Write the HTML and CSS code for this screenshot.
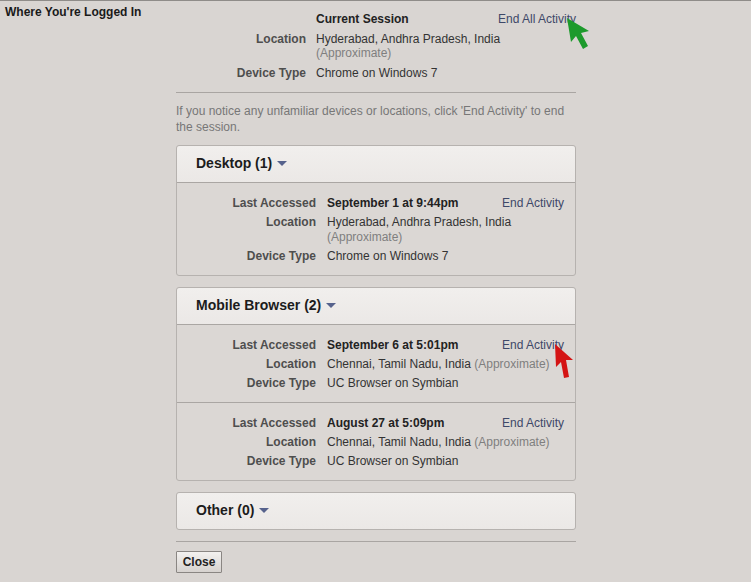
FILE: index.html
```html
<!DOCTYPE html>
<html lang="en">
<head>
    <meta charset="UTF-8">
    <meta name="viewport" content="width=device-width, initial-scale=1.0">
    <title>Where You're Logged In</title>
    <link rel="stylesheet" href="styles.css">
</head>
<body>
    <div class="layout">
        <h1 class="title">Where You're Logged In</h1>

        <div class="main">
            <div class="info current">
                <span class="label"></span>
                <span class="value strong">Current Session</span>
                <a class="action" href="#">End All Activity</a>

                <span class="label">Location</span>
                <span class="value wide">Hyderabad, Andhra Pradesh, India<br><span class="muted">(Approximate)</span></span>

                <span class="label">Device Type</span>
                <span class="value wide">Chrome on Windows 7</span>
            </div>

            <p class="notice">If you notice any unfamiliar devices or locations, click 'End Activity' to end the session.</p>

            <div class="panel">
                <div class="panel-head">Desktop (1) <span class="caret"></span></div>
                <div class="session">
                    <div class="info">
                        <span class="label">Last Accessed</span>
                        <span class="value strong">September 1 at 9:44pm</span>
                        <a class="action" href="#">End Activity</a>

                        <span class="label">Location</span>
                        <span class="value wide">Hyderabad, Andhra Pradesh, India<br><span class="muted">(Approximate)</span></span>

                        <span class="label">Device Type</span>
                        <span class="value wide">Chrome on Windows 7</span>
                    </div>
                </div>
            </div>

            <div class="panel">
                <div class="panel-head">Mobile Browser (2) <span class="caret"></span></div>
                <div class="session">
                    <div class="info">
                        <span class="label">Last Accessed</span>
                        <span class="value strong">September 6 at 5:01pm</span>
                        <a class="action" href="#">End Activity</a>

                        <span class="label">Location</span>
                        <span class="value wide">Chennai, Tamil Nadu, India <span class="muted">(Approximate)</span></span>

                        <span class="label">Device Type</span>
                        <span class="value wide">UC Browser on Symbian</span>
                    </div>
                </div>
                <div class="session">
                    <div class="info">
                        <span class="label">Last Accessed</span>
                        <span class="value strong">August 27 at 5:09pm</span>
                        <a class="action" href="#">End Activity</a>

                        <span class="label">Location</span>
                        <span class="value wide">Chennai, Tamil Nadu, India <span class="muted">(Approximate)</span></span>

                        <span class="label">Device Type</span>
                        <span class="value wide">UC Browser on Symbian</span>
                    </div>
                </div>
            </div>

            <div class="panel">
                <div class="panel-head">Other (0) <span class="caret"></span></div>
            </div>

            <div class="footer">
                <button class="btn" type="button">Close</button>
            </div>
        </div>
    </div>

    <!-- annotation cursors drawn over the screenshot -->
    <svg class="cursor green" width="26" height="34" viewBox="0 0 26 34">
        <polygon points="0,0 4,24 9,18 16,31 21,28 14,15 22,13" fill="#1d9a2c"/>
    </svg>
    <svg class="cursor red" width="22" height="36" viewBox="0 0 22 36">
        <polygon points="0,0 1,23 6,18 9,34 14,33 11,16 18,16" fill="#d41414"/>
    </svg>
</body>
</html>
```

FILE: styles.css
```css
*, *::before, *::after {
    box-sizing: border-box;
}
body {
    margin: 0;
    min-height: 582px;
    background: #d9d5d2;
    border-top: 1px solid #8f8c89;
    font-family: "Liberation Sans", Arial, sans-serif;
    font-size: 12px;
    color: #333;
    position: relative;
}
.layout {
    display: flex;
}
.title {
    width: 176px;
    margin: 0;
    padding: 4px 0 0 5px;
    font-size: 12px;
    line-height: 14px;
    color: #1a1a1a;
}
.main {
    width: 400px;
    padding-top: 11px;
}

/*--------- INFO TABLE -------------*/
.info {
    display: grid;
    grid-template-columns: 139px 1fr auto;
    column-gap: 11px;
    row-gap: 4px;
    line-height: 15px;
}
.info .label {
    grid-column: 1;
    text-align: right;
    font-weight: bold;
    color: #4e4e4e;
}
.info .value {
    color: #333;
}
.info .wide {
    grid-column: span 2;
}
.info .strong {
    font-weight: bold;
    color: #222;
}
.muted {
    color: #7f7f7f;
}
.action {
    color: #3e4868;
    text-decoration: none;
}
.info.current {
    grid-template-columns: 130px 1fr auto;
    column-gap: 10px;
    row-gap: 6px;
    line-height: 14px;
    padding-bottom: 12px;
    border-bottom: 1px solid #a9a5a2;
}

.notice {
    margin: 10px 0 10px;
    line-height: 16px;
    color: #777;
}

/*--------- PANELS -------------*/
.panel {
    border: 1px solid #b6b2af;
    border-radius: 3px;
    margin-bottom: 11px;
    background: #dbd7d4;
}
.panel-head {
    padding: 9px 19px 10px;
    font-size: 14px;
    line-height: 17px;
    font-weight: bold;
    color: #1c1c1c;
    background: linear-gradient(#f1efed, #ebe8e6);
    border-radius: 3px 3px 0 0;
}
.panel-head:last-child {
    border-radius: 3px;
}
.caret {
    display: inline-block;
    width: 0;
    height: 0;
    margin-left: 1px;
    vertical-align: 2px;
    border-left: 5px solid transparent;
    border-right: 5px solid transparent;
    border-top: 5px solid #56628c;
}
.session {
    padding: 13px 11px 11px 0;
    border-top: 1px solid #aaa6a3;
}

/*--------- FOOTER -------------*/
.footer {
    border-top: 1px solid #a9a5a2;
    padding-top: 9px;
}
.btn {
    width: 46px;
    height: 22px;
    padding: 0;
    font-family: "Liberation Sans", Arial, sans-serif;
    font-size: 12px;
    font-weight: bold;
    color: #222;
    border: 1px solid #8a8683;
    border-radius: 1px;
    background: linear-gradient(#f3f1ef, #d6d2cf);
}

/*--------- CURSORS -------------*/
.cursor {
    position: absolute;
}
.cursor.green {
    left: 567px;
    top: 17px;
}
.cursor.red {
    left: 555px;
    top: 343px;
}
```
